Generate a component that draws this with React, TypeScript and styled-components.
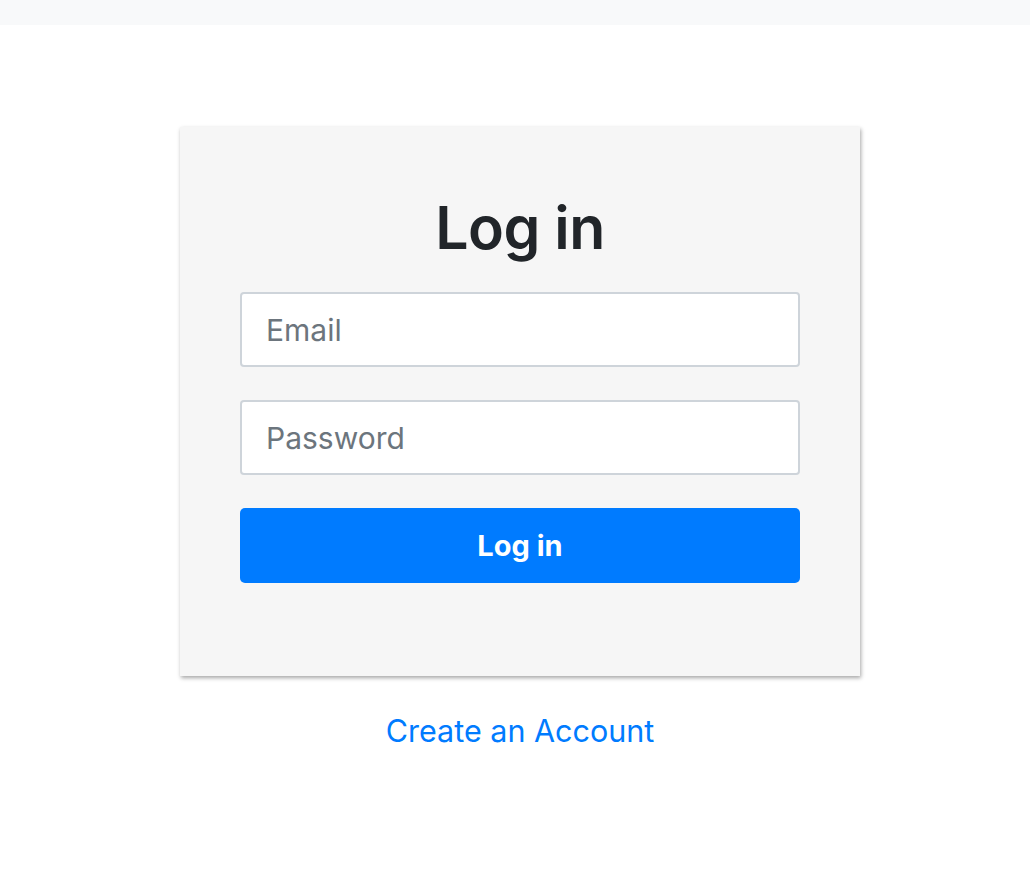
import styled, { createGlobalStyle } from "styled-components";

const GlobalStyle = createGlobalStyle`
  body {
    margin: 0;
    background: #fff;
    font-family: "Inter", "Noto Sans", "Liberation Sans", sans-serif;
    color: #212529;
  }
`;

const TopBar = styled.div`
  height: 25px;
  background-color: #f8f9fa;
`;

const Page = styled.main`
  display: flex;
  flex-direction: column;
  align-items: center;
  padding: 102px 0 0 10px;
`;

const Card = styled.div`
  width: 680px;
  box-sizing: border-box;
  padding: 65px 60px 93px;
  background-color: #f6f6f6;
  box-shadow: 1px 2px 4px rgba(0, 0, 0, 0.35);
  display: flex;
  flex-direction: column;
`;

const Title = styled.h1`
  margin: 0 0 28px;
  text-align: center;
  font-size: 59px;
  line-height: 72px;
  font-weight: 600;
  color: #212529;
  letter-spacing: -0.5px;
`;

const Form = styled.form`
  display: flex;
  flex-direction: column;
  gap: 33px;
`;

const Input = styled.input`
  height: 75px;
  box-sizing: border-box;
  padding: 0 24px;
  border: 2px solid #ced4da;
  border-radius: 4px;
  background: #fff;
  font-family: inherit;
  font-size: 30px;
  color: #495057;

  &::placeholder {
    color: #6c757d;
  }
`;

const SubmitButton = styled.button`
  height: 75px;
  border: none;
  border-radius: 5px;
  background-color: #007bff;
  color: #fff;
  font-family: inherit;
  font-size: 29px;
  font-weight: 700;
  cursor: pointer;
`;

const AccountLink = styled.a`
  margin-top: 37px;
  font-size: 30.5px;
  line-height: 36px;
  color: #007bff;
  text-decoration: none;
`;

function App() {
  return (
    <>
      <GlobalStyle />
      <TopBar />
      <Page>
        <Card>
          <Title>Log in</Title>
          <Form onSubmit={(e) => e.preventDefault()}>
            <Input type="email" placeholder="Email" />
            <Input type="password" placeholder="Password" />
            <SubmitButton type="submit">Log in</SubmitButton>
          </Form>
        </Card>
        <AccountLink href="#">Create an Account</AccountLink>
      </Page>
    </>
  );
}

export default App;
